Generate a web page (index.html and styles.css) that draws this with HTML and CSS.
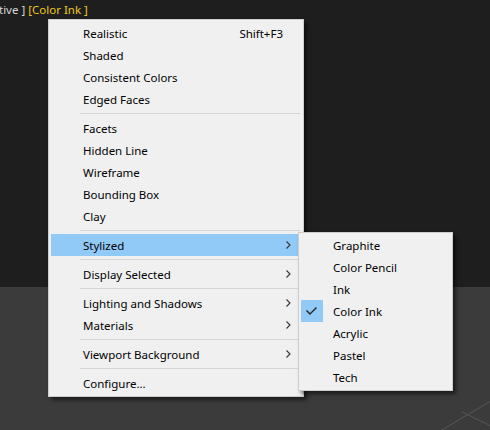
FILE: index.html
```html
<!DOCTYPE html>
<html>
<head>
<meta charset="utf-8">
<link rel="stylesheet" href="styles.css">
</head>
<body>
<div class="viewport">
  <div class="vp-top">
    <div class="vp-label"><span class="lbl-grey">tive ]</span> <span class="lbl-yellow">[Color Ink ]</span></div>
  </div>
  <div class="vp-bottom"></div>
  <svg class="grid" width="490" height="430" viewBox="0 0 490 430">
    <line x1="440" y1="431" x2="491" y2="401" />
    <line x1="462" y1="412" x2="491" y2="426" />
  </svg>

  <div class="menu main-menu">
    <div class="item"><span class="label">Realistic</span><span class="shortcut">Shift+F3</span></div>
    <div class="item"><span class="label">Shaded</span></div>
    <div class="item"><span class="label">Consistent Colors</span></div>
    <div class="item"><span class="label">Edged Faces</span></div>
    <div class="sep"></div>
    <div class="item"><span class="label">Facets</span></div>
    <div class="item"><span class="label">Hidden Line</span></div>
    <div class="item"><span class="label">Wireframe</span></div>
    <div class="item"><span class="label">Bounding Box</span></div>
    <div class="item"><span class="label">Clay</span></div>
    <div class="sep"></div>
    <div class="item active"><span class="label">Stylized</span><svg class="chev" width="5" height="8" viewBox="0 0 5 8"><polyline points="0.5,0.5 4,4 0.5,7.5"/></svg></div>
    <div class="sep"></div>
    <div class="item"><span class="label">Display Selected</span><svg class="chev" width="5" height="8" viewBox="0 0 5 8"><polyline points="0.5,0.5 4,4 0.5,7.5"/></svg></div>
    <div class="sep"></div>
    <div class="item"><span class="label">Lighting and Shadows</span><svg class="chev" width="5" height="8" viewBox="0 0 5 8"><polyline points="0.5,0.5 4,4 0.5,7.5"/></svg></div>
    <div class="item"><span class="label">Materials</span><svg class="chev" width="5" height="8" viewBox="0 0 5 8"><polyline points="0.5,0.5 4,4 0.5,7.5"/></svg></div>
    <div class="sep"></div>
    <div class="item"><span class="label">Viewport Background</span><svg class="chev" width="5" height="8" viewBox="0 0 5 8"><polyline points="0.5,0.5 4,4 0.5,7.5"/></svg></div>
    <div class="sep"></div>
    <div class="item"><span class="label">Configure...</span></div>
  </div>

  <div class="menu sub-menu">
    <div class="item"><span class="label">Graphite</span></div>
    <div class="item"><span class="label">Color Pencil</span></div>
    <div class="item"><span class="label">Ink</span></div>
    <div class="item checked"><span class="check"><svg width="22" height="22" viewBox="0 0 22 22"><polyline points="5.5,10.5 9,14 15.5,7.5"/></svg></span><span class="label">Color Ink</span></div>
    <div class="item"><span class="label">Acrylic</span></div>
    <div class="item"><span class="label">Pastel</span></div>
    <div class="item"><span class="label">Tech</span></div>
  </div>
</div>
</body>
</html>
```

FILE: styles.css
```css
html, body {
  margin: 0;
  padding: 0;
}
body {
  width: 490px;
  height: 430px;
  overflow: hidden;
  font-family: "Noto Sans", "Open Sans", sans-serif;
  font-size: 11.5px;
}
.viewport {
  position: relative;
  width: 490px;
  height: 430px;
  display: flex;
  flex-direction: column;
}
.vp-top {
  height: 287px;
  background: #1e1e1e;
}
.vp-bottom {
  flex: 1;
  background: #3b3b3b;
}
.vp-label {
  padding-top: 2px;
  margin-left: -1px;
  line-height: 16px;
  white-space: nowrap;
}
.lbl-grey { color: #d6d6d6; }
.lbl-yellow { color: #edc91c; }
.grid {
  position: absolute;
  left: 0;
  top: 0;
}
.grid line {
  stroke: #575757;
  stroke-width: 1;
}
.menu {
  position: absolute;
  box-sizing: border-box;
  background: #f0f0f0;
  border: 1px solid #cdcdcd;
  padding: 2px;
  box-shadow: 3px 3px 4px rgba(0, 0, 0, 0.55);
  color: #000;
}
.main-menu {
  left: 48px;
  top: 19px;
  width: 256px;
}
.sub-menu {
  left: 298px;
  top: 232px;
  width: 155px;
  padding-top: 1px;
}
.item {
  position: relative;
  height: 22px;
  display: flex;
  align-items: center;
  padding-left: 32px;
  padding-right: 17px;
  white-space: nowrap;
}
.item .label {
  flex: 1;
}
.item.active {
  background: #91c9f7;
}
.shortcut {
  padding-right: 1px;
}
.chev {
  margin-right: -7px;
  margin-left: 4px;
}
.chev polyline {
  fill: none;
  stroke: #333;
  stroke-width: 1.1;
}
.sep {
  height: 7px;
  display: flex;
  align-items: center;
  margin-left: 29px;
  margin-right: 1px;
}
.sep::after {
  content: "";
  flex: 1;
  height: 1px;
  background: #d4d4d4;
}
.check {
  position: absolute;
  left: 0;
  top: 0;
  width: 22px;
  height: 22px;
  background: #91c9f7;
}
.check svg {
  display: block;
}
.check polyline {
  fill: none;
  stroke: #2b2b2b;
  stroke-width: 1.5;
}
```
